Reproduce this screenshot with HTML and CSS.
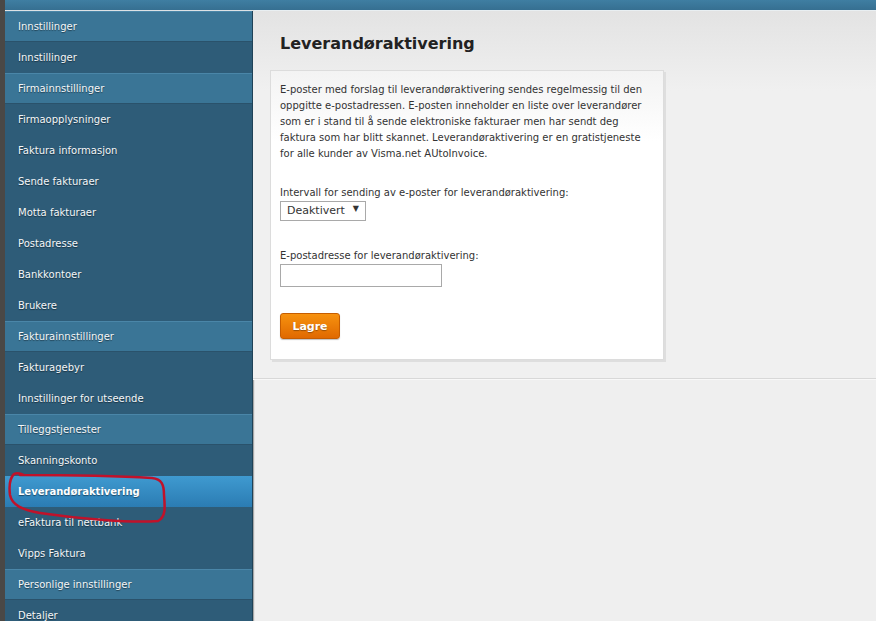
FILE: index.html
```html
<!DOCTYPE html>
<html lang="no">
  <head>
    <meta charset="utf-8" />
    <meta name="viewport" content="width=device-width, initial-scale=1" />
    <title>Leverandøraktivering</title>
    <link rel="stylesheet" href="styles.css">
  </head>
  <body>
    <div class="edge"></div>
    <div class="page">
      <div class="topbar"></div>
      <div class="columns">
        <ul class="menu">
          <li class="group">Innstillinger</li>
          <li>Innstillinger</li>
          <li class="group">Firmainnstillinger</li>
          <li>Firmaopplysninger</li>
          <li>Faktura informasjon</li>
          <li>Sende fakturaer</li>
          <li>Motta fakturaer</li>
          <li>Postadresse</li>
          <li>Bankkontoer</li>
          <li>Brukere</li>
          <li class="group">Fakturainnstillinger</li>
          <li>Fakturagebyr</li>
          <li>Innstillinger for utseende</li>
          <li class="group">Tilleggstjenester</li>
          <li>Skanningskonto</li>
          <li class="active">Leverandøraktivering</li>
          <li>eFaktura til nettbank</li>
          <li>Vipps Faktura</li>
          <li class="group">Personlige innstillinger</li>
          <li>Detaljer</li>
        </ul>

        <div class="main">
          <div class="content">
            <h1>Leverandøraktivering</h1>
            <div class="card">
              <p>
                E-poster med forslag til leverandøraktivering sendes regelmessig til den
                oppgitte e-postadressen. E-posten inneholder en liste over leverandører
                som er i stand til å sende elektroniske fakturaer men har sendt deg
                faktura som har blitt skannet. Leverandøraktivering er en gratistjeneste
                for alle kunder av Visma.net AUtoInvoice.
              </p>

              <label class="field-label">Intervall for sending av e-poster for leverandøraktivering:</label>
              <div class="select">
                <span>Deaktivert</span>
                <span class="arrow">&#9660;</span>
              </div>

              <label class="field-label second">E-postadresse for leverandøraktivering:</label>
              <input class="text-input" type="text">

              <button class="save">Lagre</button>
            </div>
          </div>
        </div>
      </div>
    </div>

    <svg class="scribble" width="876" height="621" viewBox="0 0 876 621">
      <path d="M20 475 C60 475 120 476 152 478 C162 479 164 485 164 495 C165 507 166 517 158 521 C130 523 80 519 40 513 C22 510 12 505 10 495 C9 487 9 479 14 474 C16 473 20 473 24 475" />
    </svg>
  </body>
</html>
```

FILE: styles.css
```css
* {
  box-sizing: border-box;
  margin: 0;
  padding: 0;
}

body {
  background: #efefef;
  display: flex;
  font-family: "DejaVu Sans", Verdana, sans-serif;
  height: 621px;
  overflow: hidden;
}

.edge {
  background: #4a4846;
  flex: none;
  width: 5px;
}

.page {
  display: flex;
  flex: 1;
  flex-direction: column;
}

.topbar {
  background: linear-gradient(#3f7ea2, #366f91);
  border-bottom: 1px solid #e9eff2;
  flex: none;
  height: 11px;
}

.columns {
  display: flex;
  flex: 1;
}

/* left menu */
.menu {
  background: #2e5c78;
  border-right: 1px solid #1f4257;
  box-shadow: 1px 0 1px rgba(0, 0, 0, 0.3);
  flex: none;
  list-style: none;
  width: 248px;
}

.menu li {
  color: #f4f7f9;
  font-size: 10px;
  height: 31px;
  line-height: 31px;
  padding-left: 13px;
  text-shadow: 0 1px 1px rgba(0, 0, 0, 0.45);
  white-space: nowrap;
}

.menu li.group {
  background: #3a7596;
  border-bottom: 1px solid #2a526b;
  border-top: 1px solid #4a86a8;
  line-height: 29px;
}

.menu li.active {
  background: linear-gradient(#3f9ad0, #2b7cb3);
  color: #fff;
  font-weight: bold;
}

/* main area */
.main {
  flex: 1;
}

.content {
  background: linear-gradient(#e3e3e3, #f0f0f0 80px);
  border-bottom: 1px solid #d8d8d8;
  box-shadow: 0 1px 0 #f8f8f8;
  padding: 23px 0 18px 17px;
}

h1 {
  color: #222;
  font-size: 16px;
  line-height: 20px;
  margin-bottom: 16px;
  padding-left: 10px;
}

.card {
  align-items: flex-start;
  background: linear-gradient(#f3f3f3, #fff 70px);
  border: 1px solid #dcdcdc;
  box-shadow: 2px 2px 0 #dedede;
  color: #333;
  display: flex;
  flex-direction: column;
  font-size: 10px;
  line-height: 16px;
  padding: 11px 10px 20px 9px;
  width: 394px;
}

.card p {
  margin-bottom: 23px;
}

.field-label {
  display: block;
}

.field-label.second {
  margin-top: 27px;
}

.select {
  align-items: center;
  background: #fff;
  border: 1px solid #a9a9a9;
  display: flex;
  font-size: 11px;
  gap: 8px;
  height: 20px;
  padding: 0 6px;
}

.select .arrow {
  font-size: 8px;
  line-height: 1;
  margin-top: -4px;
}

.text-input {
  background: #fff;
  border: 1px solid #a9a9a9;
  height: 23px;
  width: 162px;
}

.save {
  background: linear-gradient(#f7920f, #e06900);
  border: 1px solid #c65d00;
  border-radius: 3px;
  box-shadow: 0 1px 1px rgba(0, 0, 0, 0.25);
  color: #fff;
  font-family: "DejaVu Sans", Verdana, sans-serif;
  font-size: 11px;
  font-weight: bold;
  height: 26px;
  margin-top: 26px;
  text-shadow: 0 1px 1px rgba(0, 0, 0, 0.35);
  width: 60px;
}

/* red marker drawn over the menu */
.scribble {
  left: 0;
  pointer-events: none;
  position: absolute;
  top: 0;
}

.scribble path {
  fill: none;
  stroke: #c0122a;
  stroke-linecap: round;
  stroke-width: 2.5;
}
```
